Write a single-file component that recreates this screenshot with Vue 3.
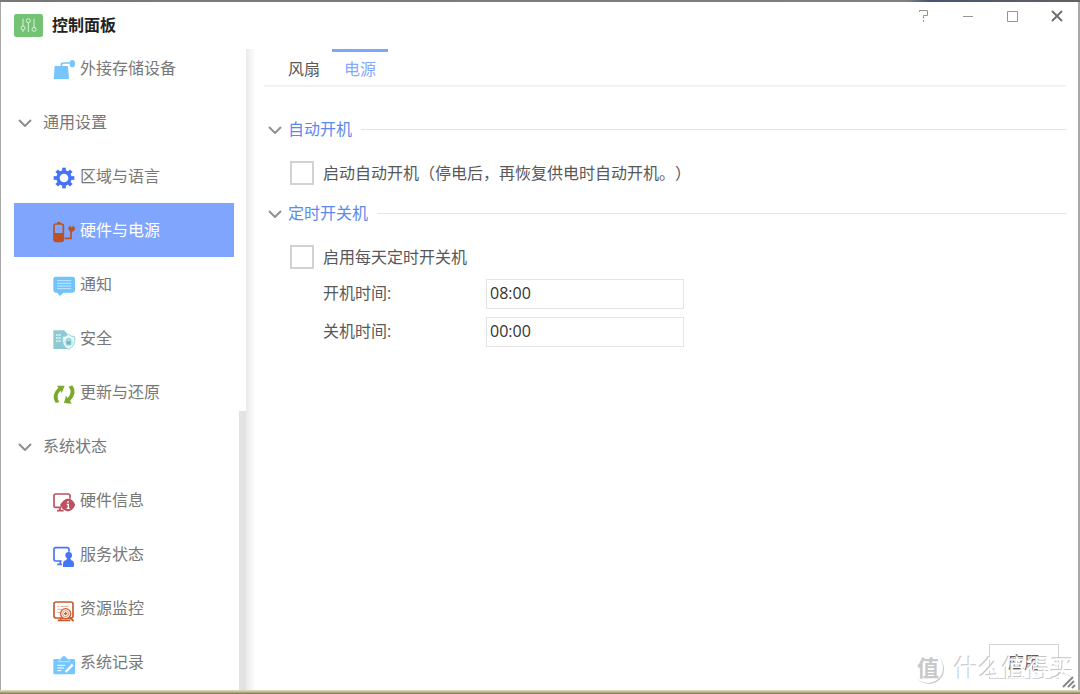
<script setup>
import { ref } from 'vue'

const groups = [
  { items: [{ id: 'storage', label: '外接存储设备' }] },
  {
    title: '通用设置',
    items: [
      { id: 'region', label: '区域与语言' },
      { id: 'power', label: '硬件与电源' },
      { id: 'notice', label: '通知' },
      { id: 'security', label: '安全' },
      { id: 'update', label: '更新与还原' },
    ],
  },
  {
    title: '系统状态',
    items: [
      { id: 'hardware', label: '硬件信息' },
      { id: 'service', label: '服务状态' },
      { id: 'monitor', label: '资源监控' },
      { id: 'log', label: '系统记录' },
    ],
  },
]
const teeth = [0, 45, 90, 135, 180, 225, 270, 315]
const current = ref('power')
const tab = ref('电源')
const autoOn = ref(false)
const scheduled = ref(false)
const onTime = ref('08:00')
const offTime = ref('00:00')
</script>

<template>
  <div class="desktop">
    <div class="window">
      <header class="titlebar">
        <svg class="logo" viewBox="0 0 87 69">
          <rect width="87" height="69" rx="7" fill="#74c274" />
          <g fill="none" stroke="#d9f2d6" stroke-width="3">
            <path d="M27 14V36M27 48V54M43 26V54M60 14V40" />
            <circle cx="27" cy="42" r="6" />
            <circle cx="43" cy="20" r="6" />
            <circle cx="60" cy="46" r="6" />
          </g>
        </svg>
        <h1>控制面板</h1>
        <div class="controls">
          <button type="button" aria-label="帮助">
            <svg viewBox="0 0 14 14"><path d="M2.500 3V1.500H10.500V6.500H6.500V9.500M6.500 11V13" /></svg>
          </button>
          <button type="button" aria-label="最小化">
            <svg viewBox="0 0 14 14"><path d="M2 7.500H12" /></svg>
          </button>
          <button type="button" aria-label="最大化">
            <svg viewBox="0 0 14 14"><path d="M2.500 2.500H12.500V12.500H2.500Z" /></svg>
          </button>
          <button type="button" aria-label="关闭">
            <svg class="close" viewBox="0 0 14 14"><path d="M3 2L13 12M13 2L3 12" /></svg>
          </button>
        </div>
      </header>

      <div class="body">
        <nav class="sidebar">
          <div class="menu">
            <section v-for="(g, i) in groups" :key="i">
              <button v-if="g.title" type="button" class="group">
                <svg class="chevron" viewBox="0 0 14 8"><path d="M1 1L7 7L13 1" /></svg>
                {{ g.title }}
              </button>
              <button
                v-for="item in g.items"
                :key="item.id"
                type="button"
                class="item"
                :class="{ active: current === item.id }"
                @click="current = item.id"
              >
                <svg class="icon" viewBox="0 0 66 60">
                  <g v-if="item.id === 'storage'" fill="#78c4fd">
                    <path d="M5 18H45L48 57H2Z" />
                    <path d="M25 20V16Q25 9 31 9H54" fill="none" stroke="#78c4fd" stroke-width="5" />
                    <ellipse cx="58" cy="11" rx="8" ry="11" />
                  </g>
                  <g v-else-if="item.id === 'region'" stroke="#4673f5" fill="none">
                    <circle cx="33" cy="30" r="18" stroke-width="10" />
                    <path
                      v-for="a in teeth"
                      :key="a"
                      d="M33 10V-1"
                      stroke-width="11"
                      :transform="`rotate(${a} 33 30)`"
                    />
                  </g>
                  <g v-else-if="item.id === 'power'" fill="#bd5122">
                    <path d="M12 0H23V6H12Z" />
                    <rect x="3" y="6" width="28" height="52" rx="6" fill="none" stroke="#bd5122" stroke-width="5" />
                    <path d="M3 33H31V53Q31 60 25 60H9Q3 60 3 53Z" />
                    <path d="M35 49H54V24" fill="none" stroke="#bd5122" stroke-width="5" />
                    <path d="M46 16H66V20Q64 29 56 29Q48 29 46 20ZM49 11H53V17H49ZM59 11H63V17H59Z" />
                  </g>
                  <g v-else-if="item.id === 'notice'">
                    <path d="M8 2H59Q66 2 66 9V43Q66 50 59 50H32L20 60L13 50H8Q1 50 1 43V9Q1 2 8 2Z" fill="#72c2fb" />
                    <path d="M12 14H55M12 22H55M12 30H55M12 38H55" stroke="#c4e8ff" stroke-width="3" />
                  </g>
                  <g v-else-if="item.id === 'security'">
                    <path d="M1 1H33L43 11V57H1Z" fill="#8bcbd1" />
                    <path d="M9 15H23M9 24H23M9 33H23" stroke="#dff5f6" stroke-width="4" stroke-dasharray="5 2 20" />
                    <path d="M47 13Q55 20 65 20V34Q63 50 47 58Q30 50 29 34V20Q39 20 47 13Z" fill="#e9f8f9" stroke="#9bd4d9" stroke-width="3" />
                    <circle cx="47" cy="36" r="13" fill="#c5e8eb" />
                    <path d="M40 33H54V44H40Z" fill="#6fbcc4" />
                    <path d="M42 33V29Q47 22 52 29V33" fill="none" stroke="#6fbcc4" stroke-width="3" />
                  </g>
                  <g v-else-if="item.id === 'update'" fill="#7ba92c">
                    <path d="M8 57L19 54Q7 37 22 20L26 27L35 5L12 5L16 11Q-8 33 8 57Z" />
                    <path d="M58 4L47 8Q60 25 44 42L39 35L33 57L56 59L51 51Q75 28 58 4Z" />
                  </g>
                  <g v-else-if="item.id === 'hardware'" fill="none" stroke="#bd5160" stroke-width="5">
                    <path d="M24 46H8Q3 46 3 41V11Q3 6 8 6H46Q51 6 51 11V20M12 56H32M21 47V56" />
                    <path d="M24 39Q34 23 45 23Q58 23 64 39Q57 55 45 56Q31 55 24 39Z" fill="#bd5160" />
                    <path d="M45 27V32M41 37H46V49M41 49H50" stroke="#fff" stroke-width="4" />
                  </g>
                  <g v-else-if="item.id === 'service'" fill="none" stroke="#4874f7" stroke-width="5">
                    <path d="M26 45H8Q3 45 3 40V10Q3 5 8 5H43Q48 5 48 10V17M13 55H27M22 46V54" />
                    <circle cx="47" cy="28" r="10" fill="#4874f7" stroke="none" />
                    <path d="M30 63V54Q30 44 39 43L43 36H51L55 43Q63 45 63 54V59Q63 63 58 63H35Z" fill="#4874f7" stroke="none" />
                  </g>
                  <g v-else-if="item.id === 'monitor'" fill="none" stroke="#c95a2c" stroke-width="5">
                    <rect x="3" y="6" width="57" height="48" rx="6" />
                    <path d="M14 61H52M23 54V61" />
                    <path d="M13 19H18M23 19H46M13 28H28M13 37H23" stroke="#e5a58a" stroke-width="3" />
                    <circle cx="38" cy="41" r="15" fill="#fff" stroke-width="4" />
                    <circle cx="38" cy="41" r="9" stroke-width="2" />
                    <path d="M38 36V46M33 41H43" stroke-width="4" />
                    <path d="M49 52L62 63" />
                  </g>
                  <g v-else>
                    <path d="M4 15H62Q66 15 66 19V57Q66 61 62 61H5Q1 61 1 57V19Q1 15 4 15Z" fill="#76c6ff" />
                    <path d="M20 15Q24 15 27 10Q29 5 33 5Q37 5 39 10Q42 15 47 15L50 23H17Z" fill="#76c6ff" stroke="#d6efff" stroke-width="2" />
                    <path d="M13 34H36M13 42H33M13 50H25" stroke="#fff" stroke-width="3" />
                    <path d="M38 54L59 32" stroke="#fff" stroke-width="7" />
                  </g>
                </svg>
                {{ item.label }}
              </button>
            </section>
          </div>
          <div class="scroll"><div class="thumb"></div></div>
        </nav>
        <div class="shade"></div>

        <main class="content">
          <div class="tabs" role="tablist">
            <button
              v-for="t in ['风扇', '电源']"
              :key="t"
              type="button"
              role="tab"
              class="tab"
              :class="{ selected: tab === t }"
              :aria-selected="tab === t"
              @click="tab = t"
            >
              {{ t }}
            </button>
          </div>

          <section class="panel">
            <h2>
              <svg class="chevron" viewBox="0 0 14 8"><path d="M1 1L7 7L13 1" /></svg>
              自动开机
            </h2>
            <label class="check">
              <input v-model="autoOn" type="checkbox" />
              启动自动开机（停电后，再恢复供电时自动开机。）
            </label>
          </section>

          <section class="panel">
            <h2>
              <svg class="chevron" viewBox="0 0 14 8"><path d="M1 1L7 7L13 1" /></svg>
              定时开关机
            </h2>
            <label class="check">
              <input v-model="scheduled" type="checkbox" />
              启用每天定时开关机
            </label>
            <div class="fields">
              <div class="field">
                <label for="on-time">开机时间:</label>
                <input id="on-time" v-model="onTime" type="text" />
              </div>
              <div class="field">
                <label for="off-time">关机时间:</label>
                <input id="off-time" v-model="offTime" type="text" />
              </div>
            </div>
          </section>

          <footer><button type="button" class="apply">应用</button></footer>
        </main>
      </div>

      <div class="watermark">
        <span class="badge">值</span>
        <span>什么值得买</span>
      </div>
      <svg class="grip" viewBox="0 0 14 14"><path d="M1 12L11 2M6 12L12 6M10 13L13 10" /></svg>
    </div>
  </div>
</template>

<style>
body {
  background: #fff;
}
</style>

<style scoped>
* {
  box-sizing: border-box;
}
.desktop {
  display: flex;
  min-height: 100vh;
  padding: 2px 2px 4px 1px;
  background:
    linear-gradient(#e0dcc0, #c4c09a 40%, #7a7640) bottom / 100% 4px no-repeat,
    linear-gradient(90deg, #777, #808080 84%, #4a5470 86%, #626262) top / 100% 2px no-repeat,
    #a8a8a8;
  font-family: "Open Sans", "Noto Sans CJK SC", sans-serif;
  font-size: 16px;
  line-height: 24px;
  text-spacing-trim: space-all;
  color: #585858;
}
.window {
  position: relative;
  flex: 1;
  display: flex;
  flex-direction: column;
  background: #fff;
}
button {
  padding: 0;
  border: 0;
  background: none;
  font: inherit;
  color: inherit;
  cursor: pointer;
}
.titlebar {
  display: flex;
  height: 39px;
  padding: 12px 8px 0 13px;
}
.logo {
  width: 29px;
  height: 23px;
}
h1 {
  margin: 0 0 0 9px;
  font-size: 16px;
  line-height: 22px;
  font-weight: 700;
  color: #222;
}
.controls {
  display: flex;
  gap: 16px;
  height: 28px;
  margin: -12px 0 0 auto;
}
.controls button {
  display: grid;
  place-items: center;
  width: 28px;
}
.controls svg {
  width: 14px;
  height: 14px;
  fill: none;
  stroke: #949494;
}
.controls .close {
  stroke: #707070;
  stroke-width: 2;
}
.body {
  flex: 1;
  display: flex;
}
.sidebar {
  display: flex;
  width: 245px;
}
.menu {
  flex: 1;
  padding: 0 5px 0 13px;
}
.group,
.item {
  display: flex;
  align-items: center;
  width: 100%;
  height: 54px;
  color: #787878;
}
.chevron {
  width: 14px;
  height: 8px;
  margin-top: 2px;
  fill: none;
  stroke: #909090;
  stroke-width: 2;
}
.group {
  gap: 11px;
  padding-left: 4px;
}
.item {
  gap: 5px;
  padding-left: 39px;
}
.item.active {
  background: #80a5fc;
  color: #fff;
}
.icon {
  width: 22px;
  height: 20px;
  margin-top: 4px;
  overflow: visible;
}
.scroll {
  display: flex;
  flex-direction: column;
  justify-content: flex-end;
  width: 7px;
}
.thumb {
  height: 43%;
  background: #e3e3e3;
}
.shade {
  width: 10px;
  margin-top: 8px;
  background: linear-gradient(90deg, #eaeaea, #fff);
}
.content {
  flex: 1;
  display: flex;
  flex-direction: column;
  padding: 8px 12px 11px 8px;
}
.tabs {
  display: flex;
  height: 38px;
  padding-left: 12px;
  border-bottom: 2px solid #f2f2f2;
}
.tab {
  padding: 0 12px;
  border-top: 3px solid transparent;
}
.tab.selected {
  border-color: #80a5fc;
  color: #84a8fc;
}
.panel {
  padding-left: 4px;
}
.tabs + .panel {
  margin-top: 30px;
}
.panel + .panel {
  margin-top: 16px;
}
h2 {
  display: flex;
  align-items: center;
  gap: 6px;
  margin: 0 0 20px;
  font-size: 16px;
  line-height: 24px;
  font-weight: 400;
  color: #5c88f0;
}
h2::after {
  content: "";
  flex: 1;
  height: 1px;
  margin-left: 3px;
  background: #e4e4e4;
}
.check {
  display: flex;
  align-items: center;
  gap: 9px;
  width: fit-content;
  padding-left: 22px;
}
.check input {
  appearance: none;
  width: 24px;
  height: 24px;
  margin: 0;
  border: 2px solid #d2d2d2;
  background: #fff;
}
.check input:checked {
  background: #80a5fc;
}
.fields {
  display: grid;
  gap: 8px;
  margin: 10px 0 0 55px;
}
.field {
  display: flex;
}
.field label {
  width: 163px;
  line-height: 28px;
}
.field input {
  width: 198px;
  height: 30px;
  padding: 0 3px 2px;
  border: 1px solid #e4e4e4;
  font: inherit;
  color: #333;
}
footer {
  display: flex;
  justify-content: flex-end;
  margin-top: auto;
  padding-right: 7px;
}
.apply {
  width: 70px;
  height: 35px;
  border: 1px solid #d4d4d4;
}
.watermark {
  position: absolute;
  right: 4px;
  bottom: 4px;
  display: flex;
  align-items: center;
  gap: 9px;
  font-size: 24px;
  line-height: 36px;
  color: #fff;
  text-shadow: -1px -1px 0 #c4c4c4;
  pointer-events: none;
}
.badge {
  width: 30px;
  height: 30px;
  margin-right: 2px;
  border-radius: 50%;
  box-shadow: 1px 1px 0 #c8c8c8;
  font-size: 22px;
  line-height: 28px;
  font-weight: 700;
  text-align: center;
  color: #c8c8c8;
  text-shadow: none;
}
.grip {
  position: absolute;
  right: 2px;
  bottom: 1px;
  width: 14px;
  height: 14px;
  fill: none;
  stroke: #888;
  stroke-width: 2;
}
</style>
